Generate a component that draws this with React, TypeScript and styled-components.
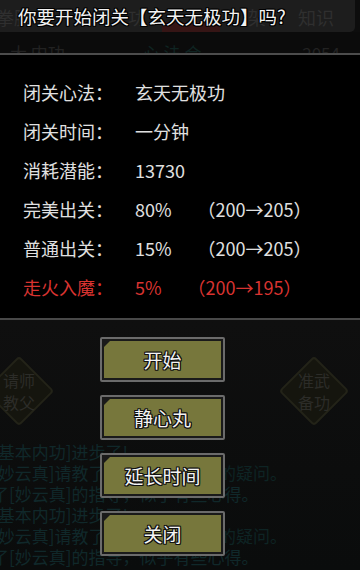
import styled, { createGlobalStyle } from 'styled-components';

const GlobalStyle = createGlobalStyle`
  html, body {
    margin: 0;
    padding: 0;
    background: #0d0d0d;
  }
  body {
    font-family: "Noto Sans CJK SC", "Noto Sans", sans-serif;
  }
`;

const rows = [
  { label: '闭关心法：', value: '玄天无极功' },
  { label: '闭关时间：', value: '一分钟' },
  { label: '消耗潜能：', value: '13730' },
  { label: '完美出关：', value: '80%', extra: '（200→205）' },
  { label: '普通出关：', value: '15%', extra: '（200→205）' },
  { label: '走火入魔：', value: '5%', extra: '（200→195）', danger: true },
];

const buttons = ['开始', '静心丸', '延长时间', '关闭'];

const logLines = [
  { text: '[基本内功]进步了!' },
  { text: '[妙云真]请教了有关', tail: '[基本内功]的疑问。' },
  { text: '了[妙云真]的指导，似乎有些心得。' },
  { text: '[基本内功]进步了!' },
  { text: '[妙云真]请教了有关', tail: '[基本内功]的疑问。' },
  { text: '了[妙云真]的指导，似乎有些心得。' },
];

export default function App() {
  return (
    <Screen>
      <GlobalStyle />
      <TopBar>
        <Ghost style={{ left: -4 }}>拳脚</Ghost>
        <Ghost style={{ left: 128 }}>功</Ghost>
        <GhostRed />
        <Ghost style={{ left: 248 }}>架</Ghost>
        <Ghost style={{ left: 298 }}>知识</Ghost>
        <Title>你要开始闭关【玄天无极功】吗?</Title>
      </TopBar>
      <DimStrip>
        <DimText>大 内功</DimText>
        <DimText $teal>心 法 合</DimText>
        <DimText $right>2054</DimText>
      </DimStrip>
      <Panel>
        {rows.map(r => (
          <Row key={r.label} $danger={r.danger}>
            <Label>{r.label}</Label>
            <Value>{r.value}</Value>
            {r.extra && <Extra>{r.extra}</Extra>}
          </Row>
        ))}
      </Panel>
      <Scene>
        <Diamond $side="left">
          <DiamondText>请师<br />教父</DiamondText>
        </Diamond>
        <Diamond $side="right">
          <DiamondText>准武<br />备功</DiamondText>
        </Diamond>
        <Log>
          {logLines.map((l, i) => (
            <LogLine key={i}>
              {l.text}
              {l.tail && <LogTail>{l.tail}</LogTail>}
            </LogLine>
          ))}
        </Log>
        <ButtonColumn>
          {buttons.map(b => (
            <GameButton key={b}>
              <ButtonFace>{b}</ButtonFace>
            </GameButton>
          ))}
        </ButtonColumn>
      </Scene>
    </Screen>
  );
}

const Screen = styled.div`
  width: 360px;
  height: 570px;
  overflow: hidden;
  display: flex;
  flex-direction: column;
  background: #0d0d0d;
`;

const TopBar = styled.div`
  position: relative;
  width: 355px;
  height: 32px;
  flex-shrink: 0;
  background: #1d1d1d;
  border-radius: 0 0 5px 0;
  display: flex;
  align-items: center;
  overflow: hidden;
`;

const Ghost = styled.span`
  position: absolute;
  top: 6px;
  font-size: 18px;
  line-height: 22px;
  color: #2f2f2f;
`;

const GhostRed = styled.span`
  position: absolute;
  left: 162px;
  top: 22px;
  width: 58px;
  height: 10px;
  background: #361515;
  border-radius: 3px 3px 0 0;
`;

const Title = styled.div`
  position: relative;
  margin-left: 18px;
  font-size: 18.5px;
  line-height: 22px;
  color: #f2f2f2;
  white-space: nowrap;
  text-shadow:
    -1px -1px 0 #000, 1px -1px 0 #000, -1px 1px 0 #000, 1px 1px 0 #000,
    0 1px 0 #000, 0 -1px 0 #000, 1px 0 0 #000, -1px 0 0 #000;
`;

const DimStrip = styled.div`
  height: 21px;
  flex-shrink: 0;
  display: flex;
  align-items: flex-start;
  overflow: hidden;
  background: #0b0b0b;
`;

const DimText = styled.span<{ $teal?: boolean; $right?: boolean }>`
  font-size: 17px;
  line-height: 17px;
  padding-top: 12px;
  color: ${p => (p.$teal ? '#0f2422' : '#222')};
  margin-left: ${p => (p.$right ? 'auto' : p.$teal ? '78px' : '10px')};
  margin-right: ${p => (p.$right ? '20px' : '0')};
`;

const Panel = styled.div`
  flex-shrink: 0;
  height: 267px;
  box-sizing: border-box;
  padding: 17px 0 0 23px;
  background: #000;
  border-top: 2px solid #4c4c4c;
  border-bottom: 2px solid #484848;
  display: flex;
  flex-direction: column;
`;

const Row = styled.div<{ $danger?: boolean }>`
  display: flex;
  align-items: center;
  height: 39px;
  font-size: 18px;
  color: ${p => (p.$danger ? '#d83330' : '#e0e0e0')};
  white-space: nowrap;
`;

const Label = styled.span`
  width: 112px;
`;

const Value = styled.span``;

const Extra = styled.span`
  margin-left: 26px;
`;

const Scene = styled.div`
  position: relative;
  flex: 1;
  background: linear-gradient(180deg, #0f0f0f 0%, #0c0d0d 60%, #0a0c0c 100%);
  overflow: hidden;
`;

const Diamond = styled.div<{ $side: 'left' | 'right' }>`
  position: absolute;
  top: 36px;
  left: ${p => (p.$side === 'left' ? '-16px' : '279px')};
  width: 70px;
  height: 70px;
  display: flex;
  align-items: center;
  justify-content: center;

  &::before {
    content: '';
    position: absolute;
    inset: 10px;
    transform: rotate(45deg);
    background: #15150e;
    border: 2px solid #232318;
    border-radius: 4px;
  }
`;

const DiamondText = styled.div`
  position: relative;
  font-size: 16px;
  line-height: 22px;
  color: #2c2c28;
  text-align: center;
`;

const Log = styled.div`
  position: absolute;
  left: -8px;
  top: 121px;
  display: flex;
  flex-direction: column;
`;

const LogLine = styled.div`
  font-size: 17px;
  line-height: 21px;
  color: #10282a;
  white-space: nowrap;
`;

const LogTail = styled.span`
  color: #0e2424;
`;

const ButtonColumn = styled.div`
  position: absolute;
  left: 100px;
  top: 17px;
  display: flex;
  flex-direction: column;
  gap: 13px;
`;

const GameButton = styled.div`
  width: 125px;
  height: 45px;
  box-sizing: border-box;
  border: 2px solid #6b6b6b;
  border-radius: 2px;
  padding: 2px;
  background: #1a1a1a;
  display: flex;
`;

const ButtonFace = styled.div`
  position: relative;
  flex: 1;
  background: #77773c;
  display: flex;
  align-items: center;
  justify-content: center;
  font-size: 19px;
  font-weight: 400;
  color: #f4f4f4;
  text-shadow:
    -1px -1px 0 #111, 1px -1px 0 #111, -1px 1px 0 #111, 1px 1px 0 #111,
    0 1px 0 #111, 0 -1px 0 #111, 1px 0 0 #111, -1px 0 0 #111;

  &::before {
    content: '';
    position: absolute;
    left: 0;
    top: 0;
    border-style: solid;
    border-width: 6px 6px 0 0;
    border-color: #1a1a1a transparent transparent transparent;
  }
`;
